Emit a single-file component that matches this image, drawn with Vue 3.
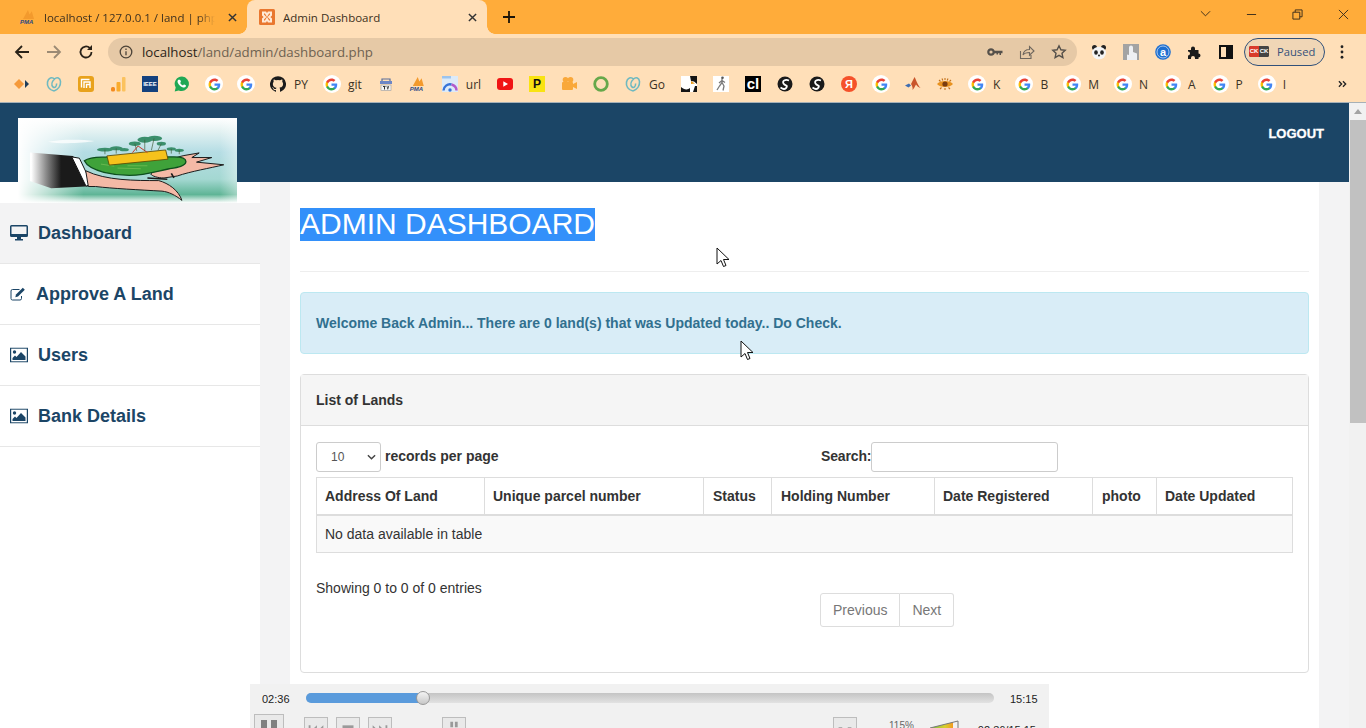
<script setup>
const bookmarks = [
	{ icon: "diamond" }, { icon: "swirl" }, { icon: "analytics" }, { icon: "bars" },
	{ icon: "ieee" }, { icon: "whatsapp" }, { icon: "google" }, { icon: "google" },
	{ icon: "github", label: "PY" }, { icon: "google", label: "git" }, { icon: "tv" }, { icon: "pma" },
	{ icon: "arc", label: "url" }, { icon: "youtube" }, { icon: "p" }, { icon: "camera" },
	{ icon: "ring" }, { icon: "swirl", label: "Go" }, { icon: "bird" }, { icon: "runner" },
	{ icon: "cl" }, { icon: "ball" }, { icon: "ball" }, { icon: "ya" },
	{ icon: "google" }, { icon: "matlab" }, { icon: "eye" }, { icon: "google", label: "K" },
	{ icon: "google", label: "B" }, { icon: "google", label: "M" }, { icon: "google", label: "N" },
	{ icon: "google", label: "A" }, { icon: "google", label: "P" }, { icon: "google", label: "I" },
]

const menu = [
	{ label: "Dashboard", icon: "desktop", active: true },
	{ label: "Approve A Land", icon: "edit" },
	{ label: "Users", icon: "picture" },
	{ label: "Bank Details", icon: "picture" },
]

const columns = [
	{ label: "Address Of Land", width: 168 },
	{ label: "Unique parcel number", width: 219 },
	{ label: "Status", width: 68 },
	{ label: "Holding Number", width: 163 },
	{ label: "Date Registered", width: 158 },
	{ label: "photo", width: 64 },
	{ label: "Date Updated", width: 136 },
]

// tree clumps of the logo: x, y, rx, ry in the 660x258 drawing
const leaves = [
	[262, 96, 24, 6], [296, 92, 20, 6], [320, 96, 14, 5],
	[352, 78, 18, 7], [382, 66, 22, 9], [412, 62, 22, 8], [432, 78, 14, 6],
	[462, 94, 14, 5], [486, 98, 14, 5],
]
const trunks = "M262 96v14M296 92v16M352 78l6 22M382 66v34M410 62l-8 36M432 78l-10 20M462 94v14M486 98v12"
</script>

<template>
	<div class="screen">
		<svg class="defs" width="0" height="0">
			<symbol id="g-logo" viewBox="0 0 24 24">
				<path fill="#4285f4" d="M22.56 12.25c0-.78-.07-1.53-.2-2.25H12v4.26h5.92c-.26 1.37-1.04 2.53-2.21 3.31v2.77h3.57c2.08-1.92 3.28-4.74 3.28-8.09z" />
				<path fill="#34a853" d="M12 23c2.97 0 5.46-.98 7.28-2.66l-3.57-2.77c-.98.66-2.23 1.06-3.71 1.06-2.86 0-5.29-1.93-6.16-4.53H2.18v2.84C3.99 20.53 7.7 23 12 23z" />
				<path fill="#fbbc05" d="M5.84 14.09c-.22-.66-.35-1.36-.35-2.09s.13-1.43.35-2.09V7.07H2.18C1.43 8.55 1 10.22 1 12s.43 3.45 1.18 4.93l2.85-2.22.81-.62z" />
				<path fill="#ea4335" d="M12 5.38c1.62 0 3.06.56 4.21 1.64l3.15-3.15C17.45 2.09 14.97 1 12 1 7.7 1 3.99 3.47 2.18 7.07l3.66 2.84c.87-2.6 3.3-4.53 6.16-4.53z" />
			</symbol>
			<symbol id="swirl" viewBox="0 0 16 16">
				<path fill="none" stroke="#6fb9c0" stroke-width="1.600" d="M8 15C3 14 .8 10 1.500 6 2.300 2 6 .5 8.500 3c2.500-2.500 5.700-1 6 2.500.3 4-2 8-6.500 9.500M8.500 3C6 5.500 5 9 7 11c2 1.500 4-1 3.500-3.500" />
			</symbol>
			<symbol id="ball" viewBox="0 0 16 16">
				<circle cx="8" cy="8" r="7.500" fill="#1a1a1a" />
				<path fill="none" stroke="#fff" stroke-width="1.800" d="M12 4.500C8 3 5 5 6.500 7.500S11 9 9.500 11.500 6 13 3.500 11.500" />
			</symbol>
			<symbol id="picture" viewBox="0 0 18 15">
				<rect x=".6" y=".6" width="16.800" height="13.800" fill="#fff" stroke="#1b4566" stroke-width="1.200" />
				<circle cx="4.500" cy="4.500" r="1.700" fill="#1b4566" />
				<path fill="#1b4566" d="M2.500 12.500V10.500L5 8l1.500 1.500L11 4.500l4.500 4.500v3.500z" />
			</symbol>
		</svg>

		<!-- browser chrome -->
		<div class="tabstrip">
			<div class="tab">
				<span class="pma"><i class="pma__flame"></i><b>PMA</b></span>
				<span class="tab__title tab__title--cut">localhost / 127.0.0.1 / land | phpMyAdmin</span>
				<svg class="tab__close" viewBox="0 0 10 10"><path d="M1 1l8 8M9 1l-8 8" /></svg>
			</div>
			<div class="tab tab--active">
				<svg class="xampp" viewBox="0 0 16 16">
					<rect width="16" height="16" rx="1.500" fill="#e9772f" />
					<path fill="none" stroke="#ffe9d6" stroke-width="2" d="M4 3.500h2.500L8 6l1.500-2.500H12V6L10 8l2 2v2.500H9.500L8 10l-1.500 2.500H4V10l2-2-2-2z" />
				</svg>
				<span class="tab__title">Admin Dashboard</span>
				<svg class="tab__close" viewBox="0 0 10 10"><path d="M1 1l8 8M9 1l-8 8" /></svg>
			</div>
			<svg class="newtab" viewBox="0 0 12 12"><path d="M6 0v12M0 6h12" /></svg>
			<div class="winctl">
				<svg viewBox="0 0 12 8" class="winctl__chev"><path d="M1 1l5 5 5-5" /></svg>
				<svg viewBox="0 0 12 12" class="winctl__min"><path d="M1 6h10" /></svg>
				<svg viewBox="0 0 12 12" class="winctl__max"><path d="M1 3.500h7.500V11H1zM3.500 3.500V1H11v7.500H8.500" /></svg>
				<svg viewBox="0 0 12 12" class="winctl__close"><path d="M1 1l10 10M11 1L1 11" /></svg>
			</div>
		</div>

		<div class="toolbar">
			<svg class="navbtn" viewBox="0 0 16 16"><path d="M15 8H2M8 2L2 8l6 6" /></svg>
			<svg class="navbtn navbtn--off" viewBox="0 0 16 16"><path d="M1 8h13M8 2l6 6-6 6" /></svg>
			<svg class="navbtn navbtn--reload" viewBox="0 0 16 16">
				<path d="M13.500 8A5.500 5.500 0 1 1 11.800 4" />
				<path class="fill" d="M14 1v5H9z" />
			</svg>
			<div class="omnibox">
				<svg class="omnibox__info" viewBox="0 0 14 14">
					<circle cx="7" cy="7" r="5.800" />
					<path d="M7 6.200v4M7 3.600v1.400" />
				</svg>
				<span class="omnibox__url"><span class="omnibox__host">localhost</span>/land/admin/dashboard.php</span>
				<svg class="omni-icon omni-icon--key" viewBox="0 0 16 10">
					<circle cx="4" cy="5" r="2.700" fill="none" stroke="#55504a" stroke-width="2.200" />
					<path fill="#55504a" d="M6.500 3.800H15.500V6.200H14V8H12.500V6.200H11V7.500H9.500V6.200H6.500z" />
				</svg>
				<svg class="omni-icon" viewBox="0 0 16 16">
					<path fill="none" stroke="#6f675e" stroke-width="1.100" d="M1.500 7v7.500h10.500V11M4 11c.5-3.500 3-5.500 6.500-5.500V2.500L15 7l-4.500 4.200V8.500C8 8.500 5.500 9 4 11z" />
				</svg>
				<svg class="omni-icon omni-icon--star" viewBox="0 0 16 16">
					<path fill="none" stroke="#55504a" stroke-width="1.400" d="M8 1.800l1.900 4 4.300.5-3.200 3 .9 4.300L8 11.400l-3.900 2.200.9-4.300-3.200-3 4.300-.5z" />
				</svg>
			</div>
			<div class="exts">
				<svg class="ext" viewBox="0 0 16 16">
					<circle cx="3.500" cy="3.500" r="2.500" fill="#222" />
					<circle cx="12.500" cy="3.500" r="2.500" fill="#222" />
					<ellipse cx="8" cy="9" rx="7" ry="6.300" fill="#f4f4f4" />
					<ellipse cx="5" cy="8.500" rx="1.800" ry="2.200" fill="#222" />
					<ellipse cx="11" cy="8.500" rx="1.800" ry="2.200" fill="#222" />
					<circle cx="8" cy="11.500" r="1" fill="#222" />
				</svg>
				<svg class="ext" viewBox="0 0 16 16">
					<rect width="16" height="16" fill="#a3a3a3" />
					<path fill="#eef0f4" d="M6 3.500a2 2 0 0 1 4 0V8l4 1.500V16H4V10.500L6 11z" />
				</svg>
				<svg class="ext" viewBox="0 0 16 16">
					<circle cx="8" cy="8" r="7.800" fill="#1e6fd0" />
					<circle cx="8" cy="8" r="6" fill="none" stroke="#fff" stroke-width=".6" />
					<text x="8" y="11.500" text-anchor="middle" class="ext__a">a</text>
				</svg>
				<svg class="ext" viewBox="0 0 16 16">
					<path fill="#1c1c1c" d="M1 6h3V4.500a2 2 0 0 1 4 0V6h3.500v3.500a2 2 0 0 1 0 4V15H8v-1a2 2 0 0 0-4 0v1H1v-3.500a2 2 0 0 0 0-4z" />
				</svg>
				<svg class="ext ext--panel" viewBox="0 0 14 14">
					<rect x="1" y="1" width="12" height="12" fill="none" stroke="#111" stroke-width="2" />
					<rect x="7" y="1" width="6" height="12" fill="#111" />
				</svg>
			</div>
			<div class="profile">
				<span class="profile__pic"><b>CK</b><b class="profile__dark">CK</b></span>
				<span>Paused</span>
			</div>
			<svg class="kebab" viewBox="0 0 4 16"><circle cx="2" cy="2" r="1.600" /><circle cx="2" cy="8" r="1.600" /><circle cx="2" cy="14" r="1.600" /></svg>
		</div>

		<div class="bookmarks">
			<div v-for="(b, i) in bookmarks" :key="i" class="bm">
				<span class="bm__icon">
					<span v-if="b.icon === 'google'" class="bm__g"><svg viewBox="0 0 24 24"><use href="#g-logo" /></svg></span>
					<svg v-else-if="b.icon === 'swirl'" viewBox="0 0 16 16"><use href="#swirl" /></svg>
					<svg v-else-if="b.icon === 'ball'" viewBox="0 0 16 16"><use href="#ball" /></svg>
					<svg v-else-if="b.icon === 'diamond'" viewBox="0 0 16 16">
						<path fill="#f59a3b" d="M5 3l5 5-5 5-5-5z" />
						<path fill="#1d3c5a" d="M11 4l4 4-4 4z" />
					</svg>
					<svg v-else-if="b.icon === 'analytics'" viewBox="0 0 16 16">
						<rect width="16" height="16" rx="3" fill="#e8a21c" />
						<path fill="none" stroke="#fff" stroke-width="1.400" d="M3.500 11.500V3.500h8M6 12V6h6v6M8.500 12V8.500H12" />
					</svg>
					<svg v-else-if="b.icon === 'bars'" viewBox="0 0 16 16">
						<rect x="1" y="11" width="4" height="4.500" rx="1.500" fill="#f48a1e" />
						<rect x="6.500" y="6" width="4" height="9.500" rx="1" fill="#f9ab2c" />
						<rect x="12" y="1" width="3.500" height="14.500" rx="1" fill="#fbc25e" />
					</svg>
					<span v-else-if="b.icon === 'ieee'" class="bm__tile bm__tile--ieee">IEEE</span>
					<svg v-else-if="b.icon === 'whatsapp'" viewBox="0 0 16 16">
						<path fill="#1fa855" d="M8 .5a7.300 7.300 0 0 0-6.300 11L.7 15.500l4-1A7.300 7.300 0 1 0 8 .5z" />
						<path fill="#fff" d="M5.300 3.800c.6-.3.900 0 1.100.5l.5 1.300c.1.400-.5 1-.7 1.300.6 1.200 1.500 2 2.800 2.600.4-.4.800-1.100 1.300-.9l1.400.7c.4.200.4.700.1 1.300-.6 1-2 1.200-3.300.7-2.400-.9-4-2.600-4.800-4.700-.4-1.200 0-2.300.6-2.800z" />
					</svg>
					<svg v-else-if="b.icon === 'github'" viewBox="0 0 24 24">
						<path fill="#1b1b1b" d="M12 .3a12 12 0 0 0-3.800 23.400c.6.100.8-.3.800-.6v-2c-3.300.7-4-1.600-4-1.600-.6-1.400-1.400-1.800-1.400-1.800-1-.7.100-.7.100-.7 1.200 0 1.900 1.200 1.900 1.200 1 1.800 2.800 1.300 3.500 1 0-.8.400-1.300.7-1.600-2.700-.3-5.500-1.300-5.500-6 0-1.200.5-2.300 1.300-3.100-.2-.4-.6-1.600 0-3.200 0 0 1-.3 3.400 1.200a11.500 11.500 0 0 1 6 0c2.300-1.500 3.300-1.200 3.300-1.200.6 1.600.2 2.800 0 3.200.9.800 1.300 1.900 1.300 3.200 0 4.600-2.800 5.600-5.500 5.900.5.400.9 1 .9 2.200v3.300c0 .3.100.7.800.6A12 12 0 0 0 12 .3" />
					</svg>
					<svg v-else-if="b.icon === 'tv'" viewBox="0 0 16 16">
						<path fill="none" stroke="#5a6f9a" stroke-width="1.200" d="M4 5V3h8v2" />
						<rect x="2" y="5" width="12" height="3" fill="#6d86c6" />
						<rect x="3" y="9" width="10" height="5.500" fill="#f4f4f4" stroke="#9a9a9a" stroke-width=".6" />
						<path fill="#333" d="M5 10h2.500v1H7v2.500H6V11H5zM8.500 10l1 3.500h.6l1-3.500h-.8l-.5 2-.5-2z" />
					</svg>
					<span v-else-if="b.icon === 'pma'" class="pma pma--bm"><i class="pma__flame"></i><b>PMA</b></span>
					<svg v-else-if="b.icon === 'arc'" viewBox="0 0 16 16">
						<rect width="16" height="16" fill="#dceaf8" />
						<rect x="0" y="0" width="9" height="2.500" fill="#9cc4ee" />
						<path fill="none" stroke="#3673d8" stroke-width="2.400" d="M1.500 14.500a6.500 6.500 0 0 1 8-6" />
						<path fill="none" stroke="#b25acb" stroke-width="2.400" d="M9.500 8.500a6.500 6.500 0 0 1 5 6" />
						<circle cx="8" cy="14" r="1.700" fill="#3673d8" />
					</svg>
					<svg v-else-if="b.icon === 'youtube'" viewBox="0 0 16 16">
						<rect y="2" width="16" height="12" rx="3" fill="#f01414" />
						<path fill="#fff" d="M6.300 5.300L11 8l-4.700 2.700z" />
					</svg>
					<span v-else-if="b.icon === 'p'" class="bm__tile bm__tile--p">P</span>
					<svg v-else-if="b.icon === 'camera'" viewBox="0 0 16 16">
						<circle cx="4.500" cy="3.800" r="2.800" fill="#f9a83a" />
						<circle cx="9.500" cy="3.800" r="2.800" fill="#f9a83a" />
						<rect x="1" y="6" width="11" height="8" rx="1" fill="#f9a83a" />
						<path fill="#f9a83a" d="M12 8l4-2v7l-4-2z" />
					</svg>
					<svg v-else-if="b.icon === 'ring'" viewBox="0 0 16 16">
						<circle cx="8" cy="8" r="6.300" fill="none" stroke="#66a84a" stroke-width="2.800" />
					</svg>
					<svg v-else-if="b.icon === 'bird'" viewBox="0 0 16 16">
						<rect width="16" height="16" fill="#fff" />
						<path fill="#141414" d="M9 0h7v8l-3-2.500L10 5z" />
						<path fill="#e89a1c" d="M10 5l4 2.500L10 8z" />
						<path fill="#141414" d="M0 11c3 3 7 3 9 1v4H0zM14 10h2v6h-4z" />
					</svg>
					<svg v-else-if="b.icon === 'runner'" viewBox="0 0 16 16">
						<rect width="16" height="16" fill="#fff" />
						<path fill="none" stroke="#7a7a7a" stroke-width="1.300" d="M9 2.500v4L6.500 10 4 14M9 6.500l2 3.500-1 4.500M9 4.500L6 7M9 4.500l3 2" />
						<circle cx="9.500" cy="1.800" r="1.300" fill="#555" />
					</svg>
					<span v-else-if="b.icon === 'cl'" class="bm__tile bm__tile--cl">cl</span>
					<span v-else-if="b.icon === 'ya'" class="bm__tile bm__tile--ya">Я</span>
					<svg v-else-if="b.icon === 'matlab'" viewBox="0 0 16 16">
						<path fill="#3f6db0" d="M0 9.500L4 7.500l2 2-2.500 2z" />
						<path fill="#c9552b" d="M6 8l3.500-7c1.500 2.500 3 8 6 11-2.500-1-3.500-2-4.500-3.500-1 2-2.500 4.500-3.500 5.500.5-2-.2-4-1.500-6z" />
					</svg>
					<svg v-else-if="b.icon === 'eye'" viewBox="0 0 16 16">
						<path fill="#e8921f" d="M0 8c3-4 13-4 16 0-3 4-13 4-16 0z" />
						<circle cx="8" cy="8" r="2.600" fill="#7a3c10" />
						<path fill="none" stroke="#c4711a" stroke-width="1.100" d="M2 4l1.500 1.500M5 2.500l.8 2M8 2v2M11 2.500l-.8 2M14 4l-1.500 1.500M3 13l1.500-1.500M8 14v-2M13 13l-1.500-1.500" />
					</svg>
				</span>
				<span v-if="b.label" class="bm__label">{{ b.label }}</span>
			</div>
			<svg class="bm__more" viewBox="0 0 10 8"><path d="M1 1l3 3-3 3M5.500 1l3 3-3 3" /></svg>
		</div>

		<!-- the page itself -->
		<div class="viewport">
			<div class="page">
				<header class="topbar">
					<a class="topbar__logout">LOGOUT</a>
				</header>

				<div class="logo">
					<svg viewBox="0 0 660 258" preserveAspectRatio="none">
						<defs>
							<linearGradient id="sky" x1="0" y1="0" x2="0" y2="1">
								<stop offset="0" stop-color="#ffffff" />
								<stop offset=".14" stop-color="#e6f3f3" />
								<stop offset=".4" stop-color="#b5dde4" />
								<stop offset=".72" stop-color="#a4d8d2" />
								<stop offset=".9" stop-color="#5fb596" />
								<stop offset="1" stop-color="#ffffff" />
							</linearGradient>
							<linearGradient id="sleeve" gradientUnits="userSpaceOnUse" x1="40" y1="0" x2="130" y2="0">
								<stop offset="0" stop-color="#ffffff" />
								<stop offset=".5" stop-color="#8a8a8a" />
								<stop offset="1" stop-color="#1a1a1a" />
							</linearGradient>
							<linearGradient id="fade-left" x1="0" y1="0" x2="1" y2="0">
								<stop offset="0" stop-color="#fff" />
								<stop offset=".3" stop-color="#fff" stop-opacity="0" />
								<stop offset=".92" stop-color="#fff" stop-opacity="0" />
								<stop offset="1" stop-color="#fff" stop-opacity=".4" />
							</linearGradient>
						</defs>
						<rect width="660" height="258" fill="url(#sky)" />
						<rect width="660" height="258" fill="url(#fade-left)" />
						<path fill="#fff" opacity=".75" d="M90 72c40-8 100-8 140-2-30 6-100 10-140 2z" />
						<path fill="url(#sleeve)" d="M36 105l130 10 52 92-118 6-64-22z" />
						<path fill="#fff" stroke="#111" stroke-width="3" d="M162 118l23 4 37 78-17 7z" />
						<path fill="#f4b9a6" stroke="#1a1a1a" stroke-width="3" d="M204 160c60 30 150 30 220 30 30 8 60 30 70 60-20-16-40-26-60-28-70-4-150-8-200-14l-22 0z" />
						<path fill="#f4b9a6" stroke="#1a1a1a" stroke-width="3" d="M400 170c30-30 70-50 100-56l46-8-22 14 60 0-46 14 82 8c-40 10-100 20-140 34l-40 6c-20 0-36-6-40-12z" />
						<path fill="none" stroke="#1a1a1a" stroke-width="5" d="M390 182l60 4M462 168l8 14" />
						<path fill="#3fa23a" stroke="#0d4f1d" stroke-width="4" d="M200 130c20-14 50-10 70-12l200 0c20 0 36 4 36 14 0 14-26 18-50 22-40 8-70 20-120 20-40 0-120-10-136-44z" />
						<path fill="none" stroke="#7cc35a" stroke-width="2" d="M300 152l70 2M330 145l60 0M250 140l40 6" />
						<path fill="#f6c21c" stroke="#5a4500" stroke-width="2.500" d="M268 115l177-18 7 28-177 18z" />
						<path fill="none" stroke="#c23b2d" stroke-width="3" d="M345 105l17-20 28 20" />
						<g fill="#3b8f6c">
							<ellipse v-for="(l, i) in leaves" :key="i" :cx="l[0]" :cy="l[1]" :rx="l[2]" :ry="l[3]" />
						</g>
						<path fill="none" stroke="#3e5a35" stroke-width="2" :d="trunks" />
					</svg>
				</div>

				<div class="layout">
					<nav class="sidebar">
						<a v-for="m in menu" :key="m.label" class="navlink" :class="{ 'navlink--active': m.active }">
							<svg v-if="m.icon === 'desktop'" class="navlink__icon" viewBox="0 0 18 16">
								<path fill="#1b4566" fill-rule="evenodd" d="M1.500 0h15A1.500 1.500 0 0 1 18 1.500v9a1.500 1.500 0 0 1-1.500 1.500H11v2h2v1.500H5V14h2v-2H1.500A1.500 1.500 0 0 1 0 10.500v-9A1.500 1.500 0 0 1 1.500 0zM1.500 1.500v7.500h15V1.500z" />
							</svg>
							<svg v-else-if="m.icon === 'edit'" class="navlink__icon navlink__icon--edit" viewBox="0 0 16 14">
								<path fill="none" stroke="#1b4566" stroke-width="1" d="M9.500 2.500H2.500A1.500 1.500 0 0 0 1 4v7.500A1.500 1.500 0 0 0 2.500 13h7.500a1.500 1.500 0 0 0 1.500-1.500V9" />
								<path fill="#1b4566" d="M12.800.8l2 2L8 9.500l-2.700.7.700-2.700z" />
							</svg>
							<svg v-else class="navlink__icon" viewBox="0 0 18 15"><use href="#picture" /></svg>
							<span>{{ m.label }}</span>
						</a>
					</nav>

					<main class="main">
						<div class="pagehead">
							<h1 class="pagehead__title"><span>ADMIN DASHBOARD</span></h1>
						</div>

						<div class="alert">Welcome Back Admin... There are 0 land(s) that was Updated today.. Do Check.</div>

						<section class="panel">
							<div class="panel__head">List of Lands</div>
							<div class="panel__body">
								<div class="dt-top">
									<div class="dt-length">
										<span class="fake-select">10
											<svg viewBox="0 0 10 6"><path d="M1 1l4 4 4-4" /></svg>
										</span>
										<span class="dt-label">records per page</span>
									</div>
									<div class="dt-search">
										<span class="dt-label dt-label--search">Search:</span>
										<span class="fake-input"></span>
									</div>
								</div>

								<table class="dt">
									<thead>
										<tr>
											<th v-for="c in columns" :key="c.label" :style="{ width: c.width + 'px' }">{{ c.label }}</th>
										</tr>
									</thead>
									<tbody>
										<tr><td :colspan="columns.length">No data available in table</td></tr>
									</tbody>
								</table>

								<div class="dt-foot">
									<div class="dt-info">Showing 0 to 0 of 0 entries</div>
									<div class="pager">
										<a>Previous</a><a>Next</a>
									</div>
								</div>
							</div>
						</section>
					</main>
				</div>
			</div>

			<div class="scrollbar">
				<svg class="scrollbar__arrow" viewBox="0 0 8 5"><path d="M4 0l4 5H0z" /></svg>
				<div class="scrollbar__thumb"></div>
			</div>
		</div>

		<!-- video player overlay -->
		<div class="player">
			<div class="player__seek">
				<span class="player__time">02:36</span>
				<div class="player__track">
					<div class="player__done"></div>
					<div class="player__knob"></div>
				</div>
				<span class="player__time player__time--end">15:15</span>
			</div>
			<div class="player__btns">
				<span class="pbtn pbtn--big"><i></i><i></i></span>
				<span class="pbtn pbtn--prev">
					<svg viewBox="0 0 24 22"><path d="M4 7h2v12H4zM13 7v12L6.500 13zM20 7v12l-6.500-6z" /></svg>
				</span>
				<span class="pbtn pbtn--stop">
					<svg viewBox="0 0 24 22"><path d="M6 7h12v12H6z" /></svg>
				</span>
				<span class="pbtn pbtn--next">
					<svg viewBox="0 0 24 22"><path d="M4 7v12l6.500-6zM11 7v12l6.500-6zM18 7h2v12h-2z" /></svg>
				</span>
				<span class="pbtn pbtn--snap">
					<svg viewBox="0 0 24 22"><path d="M8 3h3v6H8zM13 3h3v6h-3zM4 10h16v3H4z" /></svg>
				</span>
				<span class="player__spacer"></span>
				<span class="pbtn">
					<svg viewBox="0 0 24 22"><path d="M5 9h4v2H7v3H5zM15 9h4v5h-2v-3h-2z" /></svg>
				</span>
				<span class="player__vol">115%</span>
				<svg class="player__wedge" viewBox="0 0 30 14">
					<defs>
						<linearGradient id="vol" x1="0" y1="0" x2="1" y2="0">
							<stop offset="0" stop-color="#6fbe4a" />
							<stop offset=".65" stop-color="#d9cf2c" />
							<stop offset="1" stop-color="#f29a22" />
						</linearGradient>
					</defs>
					<path d="M0 8L23 2.300V14H0z" fill="url(#vol)" />
					<path d="M0 8L28 1v13" fill="none" stroke="#777" stroke-width="1" />
				</svg>
				<span class="player__clock">02:36/15:15</span>
			</div>
		</div>

		<!-- two captured mouse pointers -->
		<svg class="cursor cursor--one" viewBox="0 0 14 22"><path d="M1 1v16l4-3.500 2.500 6 2.500-1-2.500-6H13z" /></svg>
		<svg class="cursor cursor--two" viewBox="0 0 14 22"><path d="M1 1v16l4-3.500 2.500 6 2.500-1-2.500-6H13z" /></svg>
	</div>
</template>

<style>
html, body {
	margin: 0;
	overflow: hidden;
	background: #fff;
}
</style>

<style scoped>
.screen {
	position: relative;
	width: 1366px;
	height: 728px;
	overflow: hidden;
	display: flex;
	flex-direction: column;
	font-family: "Liberation Sans", Arial, sans-serif;
	font-size: 14px;
	color: #333;
}
.defs {
	position: absolute;
}

/* tabs */
.tabstrip {
	flex: 0 0 34px;
	display: flex;
	align-items: stretch;
	background: #ffac3a;
	font-family: "Open Sans", "Liberation Sans", sans-serif;
	font-size: 11.500px;
}
.tab {
	width: 247px;
	display: flex;
	align-items: center;
	gap: 7px;
	padding: 0 10px 0 20px;
	box-sizing: border-box;
	color: #3d3020;
}
.tab--active {
	position: relative;
	width: 240px;
	background: #ffdfb8;
	border-radius: 8px 8px 0 0;
	padding-left: 12px;
	gap: 8px;
}
.tab--active::before,
.tab--active::after {
	content: "";
	position: absolute;
	bottom: 0;
	width: 8px;
	height: 8px;
}
.tab--active::before {
	left: -8px;
	background: radial-gradient(circle at 0 0, transparent 7.500px, #ffdfb8 8px);
}
.tab--active::after {
	right: -8px;
	background: radial-gradient(circle at 100% 0, transparent 7.500px, #ffdfb8 8px);
}
.tab__title {
	flex: 1;
	white-space: nowrap;
	overflow: hidden;
}
.tab__title--cut {
	-webkit-mask-image: linear-gradient(90deg, #000 90%, transparent);
	mask-image: linear-gradient(90deg, #000 90%, transparent);
}
.tab__close {
	width: 9px;
	height: 9px;
	fill: none;
	stroke: #333;
	stroke-width: 1.600;
	margin-left: 6px;
}
.xampp {
	width: 16px;
	height: 16px;
}
.pma {
	position: relative;
	flex: 0 0 17px;
	height: 16px;
	display: block;
}
.pma b {
	position: absolute;
	left: 0;
	bottom: 0;
	font: italic bold 6px "Liberation Sans", sans-serif;
	color: #2d4a86;
}
.pma__flame {
	position: absolute;
	left: 3px;
	top: 1px;
	width: 11px;
	height: 9px;
	background: #f39a2d;
	clip-path: polygon(0 100%, 45% 0, 60% 50%, 80% 15%, 100% 100%);
}
.pma--bm {
	width: 17px;
}
.newtab {
	width: 12px;
	height: 12px;
	margin: 11px 0 0 16px;
	fill: none;
	stroke: #1c1408;
	stroke-width: 1.800;
}
.winctl {
	margin-left: auto;
	display: flex;
	align-items: center;
	padding: 0 17px 6px 0;
}
.winctl svg {
	fill: none;
	stroke: #33281a;
	stroke-width: 1;
}
.winctl__chev {
	width: 11px;
	height: 8px;
	margin-right: 35px;
}
.winctl__min {
	width: 11px;
	height: 11px;
	margin-right: 35px;
}
.winctl__max {
	width: 11px;
	height: 11px;
	margin-right: 35px;
}
.winctl__close {
	width: 11px;
	height: 11px;
}

/* toolbar */
.toolbar {
	flex: 0 0 35px;
	display: flex;
	align-items: center;
	background: #ffdfb8;
	padding-left: 14px;
	box-sizing: border-box;
}
.navbtn {
	width: 16px;
	height: 16px;
	margin-right: 16px;
	fill: none;
	stroke: #2a2218;
	stroke-width: 1.800;
}
.navbtn--off {
	stroke: #9b8a74;
}
.navbtn--reload {
	margin-right: 14px;
}
.navbtn .fill {
	fill: #2a2218;
	stroke: none;
}
.omnibox {
	width: 969px;
	height: 28px;
	border-radius: 14px;
	background: #e6c9a6;
	display: flex;
	align-items: center;
	padding: 0 10px 0 11px;
	box-sizing: border-box;
	font-family: "Open Sans", "Liberation Sans", sans-serif;
	font-size: 13.250px;
	color: #6e6251;
}
.omnibox__info {
	width: 14px;
	height: 14px;
	margin-right: 9px;
	fill: none;
	stroke: #4c4338;
	stroke-width: 1.300;
}
.omnibox__url {
	flex: 1;
}
.omnibox__host {
	color: #2c2418;
}
.omni-icon {
	width: 16px;
	height: 16px;
	margin-left: 16px;
}
.omni-icon--key {
	height: 10px;
}
.exts {
	display: flex;
	align-items: center;
	gap: 16px;
	margin-left: 14px;
}
.ext {
	width: 16px;
	height: 16px;
}
.ext--panel {
	width: 14px;
	height: 14px;
}
.ext__a {
	font: bold 11px "Liberation Sans", sans-serif;
	fill: #fff;
}
.profile {
	width: 81px;
	height: 28px;
	margin-left: 11px;
	border: 1px solid #30507a;
	border-radius: 14px;
	box-sizing: border-box;
	background: #f0d6b6;
	display: flex;
	align-items: center;
	gap: 8px;
	padding-left: 4px;
	font-family: "Open Sans", "Liberation Sans", sans-serif;
	font-size: 11.200px;
	color: #34507a;
}
.profile__pic {
	display: flex;
	width: 20px;
	height: 11px;
	background: #333;
	border-radius: 2px;
	overflow: hidden;
	font: bold 6px "Liberation Sans", sans-serif;
	color: #fff;
	line-height: 11px;
	text-align: center;
}
.profile__pic b {
	flex: 1;
	background: #d93a2b;
}
.profile__pic .profile__dark {
	background: #444;
}
.kebab {
	width: 4px;
	height: 14px;
	margin-left: 15px;
	fill: #222;
}

/* bookmarks */
.bookmarks {
	flex: 0 0 34px;
	display: flex;
	align-items: center;
	position: relative;
	padding: 0 0 3px 6px;
	background: #ffdfb8;
	border-bottom: 1px solid #a7b1b7;
	box-sizing: border-box;
	font-family: "Open Sans", "Liberation Sans", sans-serif;
	font-size: 12px;
	color: #3b3225;
}
.bm {
	display: flex;
	align-items: center;
	gap: 8px;
	padding: 0 8px;
}
.bm__icon {
	width: 16px;
	height: 16px;
	display: block;
}
.bm__icon > svg {
	width: 16px;
	height: 16px;
	display: block;
}
.bm__g {
	display: flex;
	align-items: center;
	justify-content: center;
	width: 18px;
	height: 18px;
	margin: -1px;
	background: #fff;
	border-radius: 50%;
}
.bm__g svg {
	width: 13px;
	height: 13px;
}
.bm__tile {
	display: block;
	width: 16px;
	height: 16px;
	line-height: 16px;
	text-align: center;
	font-family: "Liberation Sans", sans-serif;
}
.bm__tile--ieee {
	background: #14417e;
	color: #fff;
	font-size: 6px;
	font-weight: bold;
}
.bm__tile--p {
	background: #f9e311;
	color: #111;
	font-size: 12px;
	font-weight: bold;
}
.bm__tile--cl {
	background: #000;
	color: #fff;
	font-size: 15px;
	font-weight: bold;
	line-height: 15px;
}
.bm__tile--ya {
	background: #f5512a;
	color: #fff;
	border-radius: 50%;
	font-size: 11px;
	font-weight: bold;
}
.bm__more {
	position: absolute;
	right: 19px;
	top: 11px;
	width: 9px;
	height: 8px;
	fill: none;
	stroke: #222;
	stroke-width: 1.500;
}

/* page */
.viewport {
	flex: 1;
	display: flex;
	min-height: 0;
}
.page {
	flex: 1;
	position: relative;
	display: flex;
	flex-direction: column;
	min-width: 0;
}
.topbar {
	flex: 0 0 79px;
	background: #1b4566;
	display: flex;
	align-items: center;
	justify-content: flex-end;
	padding-right: 25px;
	padding-bottom: 18px;
	box-sizing: border-box;
}
.topbar__logout {
	color: #fff;
	font-size: 13px;
	font-weight: bold;
	-webkit-text-stroke: .3px #fff;
}
.logo {
	position: absolute;
	left: 18px;
	top: 15px;
	width: 219px;
	height: 85px;
	z-index: 2;
}
.logo svg {
	display: block;
	width: 100%;
	height: 100%;
}
.layout {
	flex: 1;
	display: flex;
	min-height: 0;
	background: #f3f3f4;
}
.sidebar {
	width: 260px;
	background: #fff;
	padding-top: 21px;
	box-sizing: border-box;
}
.navlink {
	height: 61px;
	box-sizing: border-box;
	display: flex;
	align-items: center;
	gap: 10px;
	padding: 0 0 0 10px;
	border-bottom: 1px solid #e7e7e7;
	color: #1b4566;
	font-size: 18px;
	font-weight: bold;
}
.navlink--active {
	background: #f3f3f4;
}
.navlink__icon {
	width: 18px;
	height: 16px;
	flex: none;
}
.navlink__icon--edit {
	width: 16px;
}
.main {
	width: 1029px;
	margin-left: 30px;
	background: #fff;
	padding: 0 10px;
	box-sizing: border-box;
}
.pagehead {
	height: 90px;
	padding-top: 26px;
	box-sizing: border-box;
	border-bottom: 1px solid #eee;
}
.pagehead__title {
	margin: 0;
	font-size: 30px;
	font-weight: 400;
	line-height: 31px;
}
.pagehead__title span {
	display: inline-block;
	padding-bottom: 2px;
	background: #3390fa;
	color: #fff;
}
.alert {
	margin-top: 20px;
	height: 62px;
	box-sizing: border-box;
	padding: 0 15px;
	line-height: 61px;
	background: #d9edf7;
	border: 1px solid #bce8f1;
	border-radius: 4px;
	color: #31708f;
	font-weight: bold;
	font-size: 14px;
}
.panel {
	margin-top: 20px;
	height: 299px;
	box-sizing: border-box;
	border: 1px solid #ddd;
	border-radius: 4px;
}
.panel__head {
	height: 51px;
	box-sizing: border-box;
	padding: 0 15px;
	line-height: 50px;
	background: #f5f5f5;
	border-bottom: 1px solid #ddd;
	font-weight: bold;
	color: #333;
}
.panel__body {
	padding: 16px 15px 0;
}
.dt-top {
	display: flex;
	height: 30px;
	font-weight: bold;
	margin-bottom: 5px;
}
.dt-length {
	display: flex;
	align-items: center;
	gap: 4px;
	width: 504px;
}
.dt-search {
	display: flex;
	align-items: center;
}
.dt-label {
	margin-bottom: 2px;
}
.dt-label--search {
	margin-left: 1px;
	letter-spacing: -.15px;
}
.fake-select {
	width: 65px;
	height: 30px;
	box-sizing: border-box;
	border: 1px solid #ccc;
	border-radius: 3px;
	padding-left: 14px;
	display: flex;
	align-items: center;
	justify-content: space-between;
	padding-right: 4px;
	font-weight: 400;
	font-size: 12px;
	color: #555;
}
.fake-select svg {
	width: 9px;
	height: 6px;
	fill: none;
	stroke: #444;
	stroke-width: 1.600;
}
.fake-input {
	width: 187px;
	height: 30px;
	box-sizing: border-box;
	border: 1px solid #ccc;
	border-radius: 3px;
}
.dt {
	border-collapse: collapse;
	table-layout: fixed;
	width: 976px;
}
.dt th,
.dt td {
	border: 1px solid #ddd;
	padding: 0 8px;
	text-align: left;
	height: 38px;
	box-sizing: border-box;
}
.dt th {
	border-bottom-width: 2px;
	height: 37px;
}
.dt th:nth-child(3),
.dt th:nth-child(4),
.dt th:nth-child(6) {
	padding-left: 9px;
}
.dt td {
	background: #f9f9f9;
}
.dt-foot {
	display: flex;
	align-items: flex-start;
}
.dt-info {
	width: 504px;
	margin-top: 27px;
	line-height: 16px;
}
.pager {
	margin-top: 40px;
	display: flex;
	color: #777;
}
.pager a {
	height: 34px;
	line-height: 32px;
	box-sizing: border-box;
	padding: 0 12px;
	border: 1px solid #ddd;
	border-radius: 3px 0 0 3px;
}
.pager a + a {
	border-left: 0;
	border-radius: 0 3px 3px 0;
}

/* scrollbar */
.scrollbar {
	flex: 0 0 17px;
	background: #f1f1f1;
	position: relative;
}
.scrollbar__arrow {
	position: absolute;
	left: 5px;
	top: 6px;
	width: 8px;
	height: 5px;
	fill: #a3a3a3;
}
.scrollbar__thumb {
	position: absolute;
	left: 1px;
	right: 0;
	top: 17px;
	height: 303px;
	background: #c1c1c1;
}

/* player */
.player {
	position: absolute;
	left: 250px;
	top: 684px;
	width: 799px;
	height: 44px;
	background: #f1f1f1;
	overflow: hidden;
	font-family: "Liberation Sans", sans-serif;
	font-size: 11px;
	color: #222;
}
.player__seek {
	display: flex;
	align-items: center;
	height: 27px;
	padding-left: 12px;
}
.player__time {
	flex: 0 0 44px;
	padding-top: 2px;
}
.player__time--end {
	margin-left: 16px;
}
.player__track {
	position: relative;
	flex: 0 0 688px;
	height: 10px;
	border-radius: 5px;
	background: linear-gradient(#c4c4c4, #e2e2e2);
}
.player__done {
	width: 117px;
	height: 100%;
	border-radius: 5px 0 0 5px;
	background: #5a9bdc;
}
.player__knob {
	position: absolute;
	left: 110px;
	top: -2px;
	width: 14px;
	height: 14px;
	box-sizing: border-box;
	border-radius: 50%;
	border: 1px solid #999;
	background: linear-gradient(#f4f4f4, #c8c8c8);
}
.player__btns {
	display: flex;
	align-items: flex-start;
	padding: 3px 0 0 4px;
}
.pbtn {
	width: 24px;
	height: 24px;
	flex: none;
	margin-top: 3px;
	box-sizing: border-box;
	border: 1px solid #bdbdbd;
	background: #e9e9e9;
}
.pbtn svg {
	display: block;
	width: 22px;
	height: 22px;
	fill: #9a9a9a;
}
.pbtn--big {
	width: 30px;
	height: 30px;
	margin-top: 0;
	display: flex;
	gap: 4px;
	justify-content: center;
	padding-top: 5px;
}
.pbtn--big i {
	width: 6px;
	height: 16px;
	background: #808080;
}
.pbtn--prev {
	margin-left: 20px;
}
.pbtn--stop,
.pbtn--next {
	margin-left: 8px;
}
.pbtn--snap {
	margin-left: 50px;
}
.player__spacer {
	flex: 0 0 367px;
}
.player__vol {
	margin: 6px 0 0 32px;
	font-size: 10px;
	color: #666;
}
.player__wedge {
	flex: none;
	width: 30px;
	height: 14px;
	margin: 6px 0 0 16px;
}
.player__clock {
	margin: 10px 0 0 18px;
}

/* pointers */
.cursor {
	position: absolute;
	width: 14px;
	height: 22px;
	fill: #fff;
	stroke: #111;
	stroke-width: 1;
	z-index: 5;
}
.cursor--one {
	left: 716px;
	top: 247px;
}
.cursor--two {
	left: 740px;
	top: 340px;
}
</style>
